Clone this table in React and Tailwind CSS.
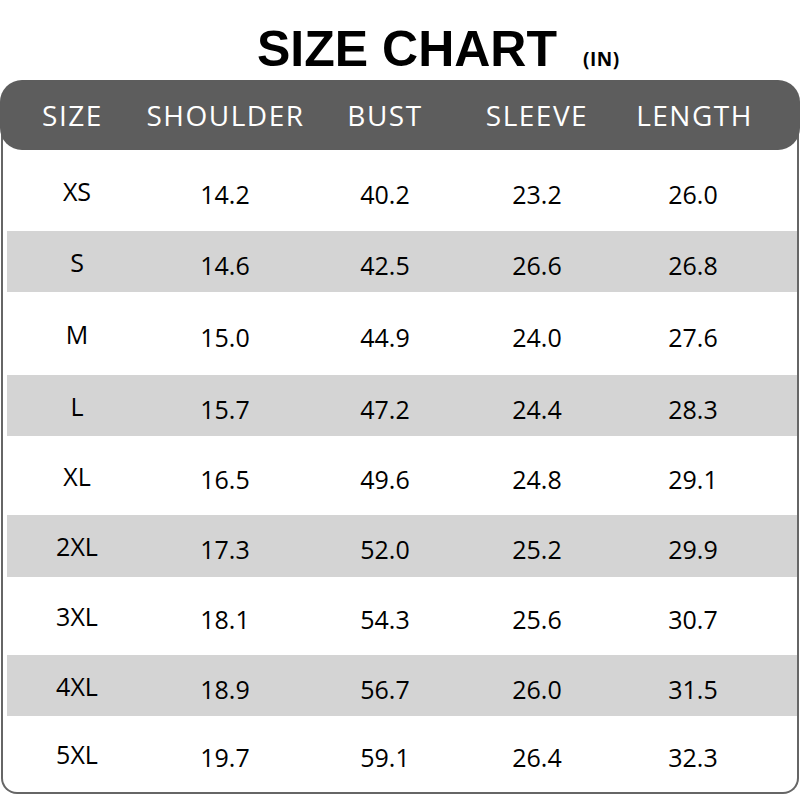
import React from 'react'

const HEADERS = ['SIZE', 'SHOULDER', 'BUST', 'SLEEVE', 'LENGTH']

const ROWS = [
  { size: 'XS', vals: ['14.2', '40.2', '23.2', '26.0'], h: 'h-[81px]' },
  { size: 'S', vals: ['14.6', '42.5', '26.6', '26.8'], h: 'h-[61px]', shade: true },
  { size: 'M', vals: ['15.0', '44.9', '24.0', '27.6'], h: 'h-[83px]' },
  { size: 'L', vals: ['15.7', '47.2', '24.4', '28.3'], h: 'h-[61px]', shade: true },
  { size: 'XL', vals: ['16.5', '49.6', '24.8', '29.1'], h: 'h-[79px]' },
  { size: '2XL', vals: ['17.3', '52.0', '25.2', '29.9'], h: 'h-[62px]', shade: true },
  { size: '3XL', vals: ['18.1', '54.3', '25.6', '30.7'], h: 'h-[78px]' },
  { size: '4XL', vals: ['18.9', '56.7', '26.0', '31.5'], h: 'h-[61px]', shade: true },
  { size: '5XL', vals: ['19.7', '59.1', '26.4', '32.3'], h: 'h-[76px]' },
]

export default function App() {
  return (
    <div className="w-[800px] h-[800px] bg-white text-black overflow-hidden">
      {/* Title */}
      <div className="h-[80px] pt-[24px] pl-[257px] flex items-baseline gap-[26px]">
        <h1 className="text-[50px] leading-none font-bold font-['Liberation_Sans',Arial,sans-serif]">SIZE CHART</h1>
        <span className="text-[19px] leading-none font-bold tracking-[0.5px] font-['Open_Sans',sans-serif]">(IN)</span>
      </div>

      {/* Table */}
      <div className="relative z-10 h-[70px] w-[800px] rounded-[22px] bg-[#5d5d5d] grid grid-cols-[145px_161px_158px_146px_169px] items-center">
        {HEADERS.map(h => (
          <div key={h} className="text-center text-white text-[28px] leading-none tracking-[1.5px] font-['Open_Sans',sans-serif]">{h}</div>
        ))}
      </div>
      <div className="-mt-[20px] pt-[20px] ml-[1px] w-[798px] border-x-2 border-b-2 border-[#666666] rounded-b-[16px]">
        {ROWS.map(r => (
          <div
            key={r.size}
            className={`ml-[4px] ${r.h} ${r.shade ? 'bg-[#d4d4d4]' : ''} grid grid-cols-[140px_156px_164px_140px_172px] items-center text-[25px] leading-none font-['Open_Sans',sans-serif]`}
          >
            <div className="text-center pt-[1px]">{r.size}</div>
            {r.vals.map((v, i) => (
              <div key={i} className="text-center pt-[7px]">{v}</div>
            ))}
          </div>
        ))}
      </div>
    </div>
  )
}
